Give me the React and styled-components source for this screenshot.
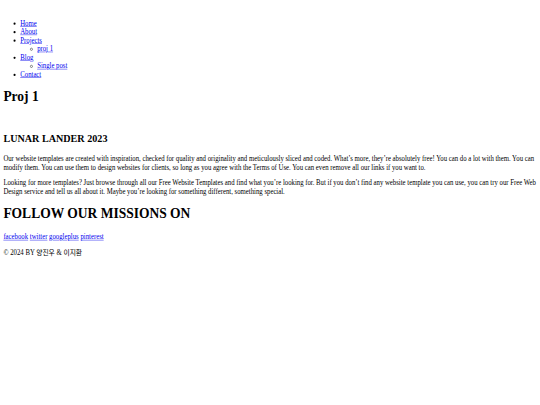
import React from 'react';
import styled, { createGlobalStyle } from 'styled-components';

// the reference is a 1280x900 page shot, squeezed into 540x405
const GlobalStyle = createGlobalStyle`
    html, body {
        overflow: hidden;
    }
    body {
        margin: 0;
        background: #fff;
    }
`

const Page = styled.div`
    width: 1264px;
    padding: 8px;
    transform: scale(0.421875, 0.45);
    transform-origin: top left;
    font-family: "Liberation Serif", "Noto Sans CJK KR", serif;
    font-size: 16px;
    line-height: 19px;
    color: #000;
`

const Header = styled.header`
    padding-top: 18px;
`

const Menu = styled.ul`
    margin: 16px 0;
    padding-left: 40px;
    list-style: disc;
`

const SubMenu = styled.ul`
    margin: 0;
    padding-left: 40px;
    list-style: circle;
`

const Link = styled.a`
    color: #0000ee;
    text-decoration: underline;
`

const Title = styled.h1`
    font-size: 32px;
    line-height: 36.8px;
    margin: 21px 0;
`

const Article = styled.section`
    padding-top: 21px;
    h2 {
        font-size: 24px;
        line-height: 27.6px;
        margin: 20px 0 21px;
    }
    p {
        margin: 16px 0;
    }
`

const Footer = styled.footer`
    p {
        margin: 16px 0;
    }
    h1 + p {
        margin-top: 24px;
    }
`

const App = () => {
    return (
        <>
            <GlobalStyle />
            <Page>
                <Header>
                    <Menu>
                        <li><Link href="#">Home</Link></li>
                        <li><Link href="#">About</Link></li>
                        <li>
                            <Link href="#">Projects</Link>
                            <SubMenu>
                                <li><Link href="#">proj 1</Link></li>
                            </SubMenu>
                        </li>
                        <li>
                            <Link href="#">Blog</Link>
                            <SubMenu>
                                <li><Link href="#">Single post</Link></li>
                            </SubMenu>
                        </li>
                        <li><Link href="#">Contact</Link></li>
                    </Menu>
                </Header>
                <Title>Proj 1</Title>
                <Article>
                    <h2>LUNAR LANDER 2023</h2>
                    <p>
                        Our website templates are created with inspiration, checked for quality and originality and meticulously sliced and coded. What’s more, they’re absolutely free! You can do a lot with them. You can modify them. You can use them to design websites for clients, so long as you agree with the Terms of Use. You can even remove all our links if you want to.
                    </p>
                    <p>
                        Looking for more templates? Just browse through all our Free Website Templates and find what you’re looking for. But if you don’t find any website template you can use, you can try our Free Web Design service and tell us all about it. Maybe you’re looking for something different, something special.
                    </p>
                </Article>
                <Footer>
                    <Title>FOLLOW OUR MISSIONS ON</Title>
                    <p>
                        <Link href="#">facebook</Link> <Link href="#">twitter</Link> <Link href="#">googleplus</Link> <Link href="#">pinterest</Link>
                    </p>
                    <p>© 2024 BY 양진우 &amp; 이지환</p>
                </Footer>
            </Page>
        </>
    )
}

export default App
